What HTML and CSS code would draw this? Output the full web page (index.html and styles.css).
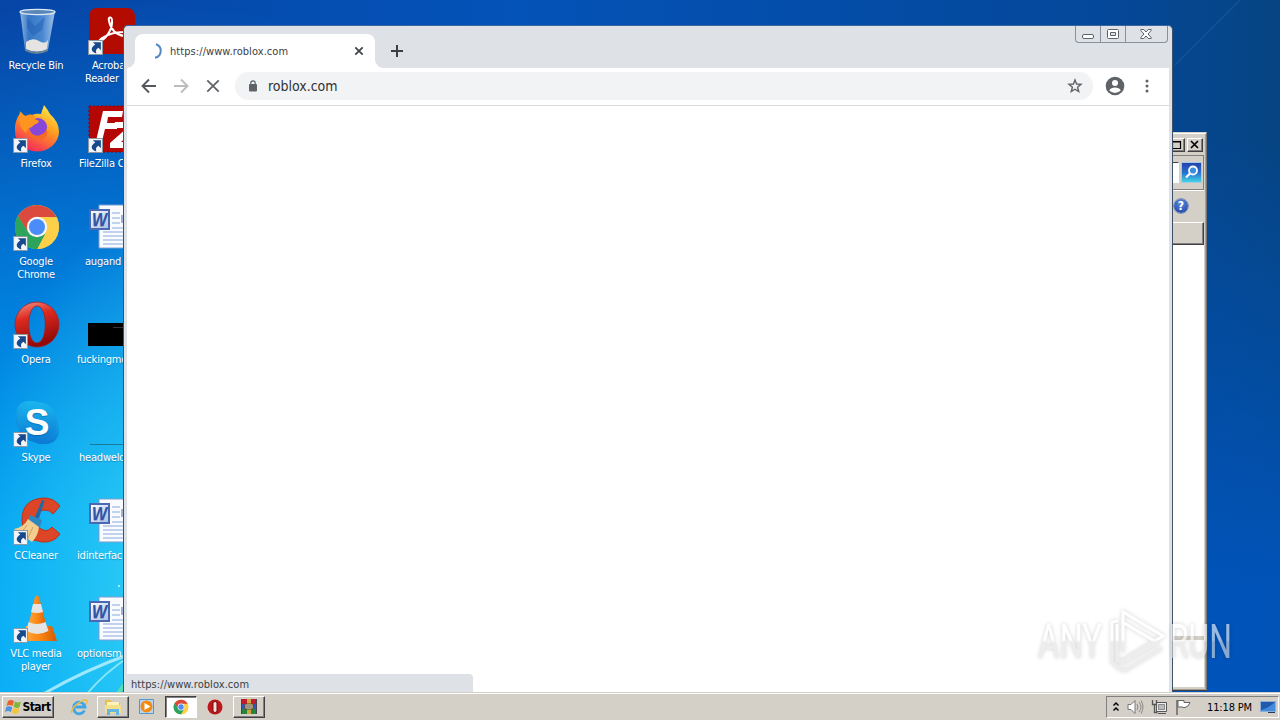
FILE: index.html
```html
<!DOCTYPE html>
<html lang="en">

<head>
    <meta charset="UTF-8" />
    <meta name="viewport" content="width=device-width, initial-scale=1.0" />
    <title>Desktop</title>
    <link rel="stylesheet" href="styles.css">
</head>

<body>
    <!-- Shared symbols -->
    <svg class="defs" width="0" height="0">
        <defs>
            <linearGradient id="gFire" x1="0.8" y1="0" x2="0.3" y2="1">
                <stop offset="0" stop-color="#fff04a" />
                <stop offset=".45" stop-color="#ff9a1f" />
                <stop offset="1" stop-color="#f5225f" />
            </linearGradient>
            <linearGradient id="gOpera" x1="0" y1="0" x2="0.3" y2="1">
                <stop offset="0" stop-color="#f7978a" />
                <stop offset=".4" stop-color="#dc2a20" />
                <stop offset="1" stop-color="#940a08" />
            </linearGradient>
            <linearGradient id="gBin" x1="0" y1="0" x2="1" y2="0">
                <stop offset="0" stop-color="#a9c9ea" />
                <stop offset=".25" stop-color="#3f7fc9" />
                <stop offset=".65" stop-color="#5594d8" />
                <stop offset="1" stop-color="#bcd6ee" />
            </linearGradient>
            <linearGradient id="gCone" x1="0" y1="0" x2="1" y2="0">
                <stop offset="0" stop-color="#ffac3e" />
                <stop offset=".5" stop-color="#fb8716" />
                <stop offset="1" stop-color="#d45a00" />
            </linearGradient>
            <linearGradient id="gSkype" x1="0" y1="0" x2="0" y2="1">
                <stop offset="0" stop-color="#19b5ee" />
                <stop offset="1" stop-color="#0c7ad4" />
            </linearGradient>
            <linearGradient id="gWord" x1="0" y1="0" x2="1" y2="1">
                <stop offset="0" stop-color="#ffffff" />
                <stop offset="1" stop-color="#a9bde6" />
            </linearGradient>
            <linearGradient id="gMark" gradientUnits="userSpaceOnUse" x1="0" y1="0" x2="0" y2="72">
                <stop offset=".5" stop-color="#fff" />
                <stop offset=".53" stop-color="#e2e2e2" />
            </linearGradient>
        </defs>
        <symbol id="arrow" viewBox="0 0 14 14">
            <path d="M0 0h14v14H0z" fill="#f3f5f8" />
            <path d="M.5.5h13v13H.5z" fill="none" stroke="#8d98a5" />
            <path d="M4.500 2h7.500v7.500L9.800 7.300C7.500 8.500 7 10 7.800 12.500 2.500 11.500 2 7 6.800 4.300z" fill="#174a8c" />
        </symbol>
        <symbol id="chrome" viewBox="0 0 48 48">
            <circle cx="24" cy="24" r="22" fill="#fcd049" />
            <path d="M24 14h19.600L33 24z" fill="#dc4a3d" />
            <path d="M33 29 24 46A22 22 0 0 0 44.500 16L43.600 14H24z" fill="#fcd049" />
            <path d="M4.950 13 15 29l9 5 8-3-8 15A22 22 0 0 1 4.950 13z" fill="#2ca45c" />
            <path d="M24 24 15 29 4.950 13A22 22 0 0 1 43.600 14H24z" fill="#dc4a3d" />
            <path d="M5 13 15.500 30 24 34l8-3-8 15A22 22 0 0 1 5 13z" fill="#2ca45c" />
            <circle cx="24" cy="24" r="10.200" fill="#f5f5f5" />
            <circle cx="24" cy="24" r="8" fill="#4b8df8" />
        </symbol>
        <symbol id="word" viewBox="0 0 48 48">
            <path d="M11 3h34v43H11z" fill="#f9fbff" stroke="#7f9dcf" />
            <path d="M24 11h8M24 16h8M24 21h8M24 26h18M15 30h26M15 34h26M15 38h26M15 42h26" stroke="#87a9dc" />
            <path d="M33 13h10v8H33z" fill="#9db4d8" />
            <path d="M2 8h19v19H2z" fill="url(#gWord)" stroke="#4a68b4" stroke-width="2" />
            <text x="11.500" y="23.500" text-anchor="middle" textLength="15" lengthAdjust="spacingAndGlyphs" class="word-letter">W</text>
        </symbol>
    </svg>

    <div class="desktop">
        <svg class="wallpaper" width="1280" height="720">
            <path d="M40 696Q80 672 130 654" fill="none" stroke="#c9f5ff" stroke-width="3" opacity=".75" />
            <path d="M84 698Q100 676 130 656" fill="none" stroke="#b4f3fa" stroke-width="2" opacity=".7" />
            <path d="M116 696L128 680" stroke="#64e6a4" stroke-width="4" opacity=".8" />
            <path d="M1175 65L1245 -5" stroke="#3f78b5" stroke-width="2" opacity=".2" />
            <circle cx="119" cy="586" r="1" fill="#d6f8ff" />
        </svg>

        <div class="icons">
            <div class="item">
                <svg viewBox="0 0 48 48">
                    <path d="M7 5 12 44Q24 50 35 44L42 5z" fill="url(#gBin)" opacity=".85" />
                    <path d="M13 36Q20 31 26 35t9-1l-1 9Q24 48 13 43z" fill="#e6e4e2" />
                    <path d="M14 12l8 8 10-9-3 13-9 6-6-8z" fill="#1d5bb0" opacity=".45" />
                    <path d="M12 43Q24 49 35 43v2Q24 51 12 45z" fill="#6b7f92" />
                    <ellipse cx="24.500" cy="6" rx="17.500" ry="2.600" fill="#5b86b8" stroke="#dce8f3" stroke-width="1.400" />
                </svg>
                <span>Recycle Bin</span>
            </div>
            <div class="item">
                <svg viewBox="0 0 48 48">
                    <rect x="1" y="2" width="46" height="46" rx="8" fill="#b30b00" />
                    <path d="M12 35C18 33 25 23 24 14c-.5-4-4-3-3 1 2 9 8 14 15 15 5 0 4-5-1-4-8 0-16 3-21 6-4 3-4 5-2 3z" fill="none" stroke="#fff" stroke-width="2" />
                    <use href="#arrow" x="0" y="34" width="15" height="15" />
                </svg>
                <span class="pad-acrobat">Acroba</span>
                <span class="pad-85">Reader</span>
            </div>
            <div class="item">
                <svg viewBox="0 0 48 48">
                    <path d="M28 10Q30 4 31 1q4 5 6 9 9 8 9 18A22 20 0 0 1 2 27Q1 17 8 8q2 3 5 4 3-2 6-1 4-2 9-1z" fill="url(#gFire)" />
                    <circle cx="25" cy="23" r="9" fill="#8747d9" />
                    <path d="M7 7q2 5 6 5 4-3 9 0-2 3 2 4 3 1 1 3-5 2-6 4-5 1-6 6Q4 22 7 7z" fill="#ff9420" />
                    <path d="M14 27q10 10 20-1 2 7-6 10-10 1-14-9z" fill="#f66a27" />
                    <use href="#arrow" x="0" y="34" width="15" height="15" />
                </svg>
                <span>Firefox</span>
            </div>
            <div class="item">
                <svg viewBox="0 0 48 48">
                    <path d="M1 2h47v46H1z" fill="#b50606" stroke="#8c0000" stroke-dasharray="2 2" />
                    <path d="M15 7h20l-1 6H20l-1 6h11l-1 6H17l-3 12H8zM27 18h22v6L33 38h14v6H22v-5l17-15H26z" fill="#fff" />
                    <use href="#arrow" x="0" y="34" width="15" height="15" />
                </svg>
                <span class="pad-79">FileZilla C</span>
            </div>
            <div class="item">
                <svg viewBox="0 0 48 48">
                    <use href="#chrome" y="1" width="48" height="48" />
                    <use href="#arrow" x="0" y="34" width="15" height="15" />
                </svg>
                <span>Google<br>Chrome</span>
            </div>
            <div class="item">
                <svg viewBox="0 0 48 48"><use href="#word" /></svg>
                <span class="pad-85">augand</span>
            </div>
            <div class="item">
                <svg viewBox="0 0 48 48">
                    <path fill-rule="evenodd" d="M24 2a22 22.500 0 0 1 0 45 22 22.500 0 0 1 0-45zm0 4c-11 0-11 37 0 37s11-37 0-37z" fill="url(#gOpera)" stroke="#a51d17" stroke-width=".7" />
                    <use href="#arrow" x="0" y="34" width="15" height="15" />
                </svg>
                <span>Opera</span>
            </div>
            <div class="item">
                <svg viewBox="0 0 48 48">
                    <path d="M0 23h48v23H0z" fill="#000" />
                    <path d="M25 27.500h12" stroke="#333" />
                </svg>
                <span class="pad-77">fuckingmo</span>
            </div>
            <div class="item">
                <svg viewBox="0 0 48 48">
                    <rect x="3" y="3" width="30" height="32" rx="13" fill="url(#gSkype)" />
                    <rect x="15" y="14" width="31" height="32" rx="13" fill="url(#gSkype)" />
                    <circle cx="24" cy="24" r="20" fill="url(#gSkype)" />
                    <text x="24" y="37" text-anchor="middle" class="skype-letter">S</text>
                    <use href="#arrow" x="0" y="34" width="15" height="15" />
                </svg>
                <span>Skype</span>
            </div>
            <div class="item">
                <svg viewBox="0 0 48 48"><path d="M2 46.500h46" stroke="#177a99" /></svg>
                <span class="pad-79">headweld</span>
            </div>
            <div class="item">
                <svg viewBox="0 0 48 48">
                    <path d="M47 10Q41 2 31 2 9 3 9 24q0 20 20 22 12 1 18-8l-8-7q-4 5-9 3-8-3-7-11 1-9 9-9 5 0 8 4z" fill="#dd4527" stroke="#b9321b" />
                    <path d="M29 4l2.500 1-6 19-4-2z" fill="#2467a8" />
                    <path d="M17 19l12 5-2 7-12-6z" fill="#2f88bd" />
                    <path d="M15 23l11 8q-1 9-7 15L1 33Q11 31 15 23z" fill="#f2cf91" />
                    <path d="M14 29 8 37M20 31l-5 11" stroke="#cca45f" />
                    <use href="#arrow" x="0" y="34" width="15" height="15" />
                </svg>
                <span>CCleaner</span>
            </div>
            <div class="item">
                <svg viewBox="0 0 48 48"><use href="#word" /></svg>
                <span class="pad-77">idinterfac</span>
            </div>
            <div class="item">
                <svg viewBox="0 0 48 48">
                    <path d="M13 32h26l5 15H9z" fill="url(#gCone)" />
                    <path d="M22 3q2-3 4 0l9 35q-11 6-21 0z" fill="url(#gCone)" />
                    <path d="M20 10h8l2 8q-6 2-12 0zM15.500 28q8 4 17 0l3 9q-11 6-22 0z" fill="#e4e4e4" />
                    <use href="#arrow" x="0" y="34" width="15" height="15" />
                </svg>
                <span>VLC media<br>player</span>
            </div>
            <div class="item">
                <svg viewBox="0 0 48 48"><use href="#word" /></svg>
                <span class="pad-77">optionsm</span>
            </div>
        </div>

        <!-- Explorer window behind the browser -->
        <div class="explorer">
            <div class="explorer-title">
                <span class="classic-btn"><svg width="14" height="12"><path d="M2.500 2.500h8v7h-8zM2 3h9" fill="none" stroke="#000" stroke-width="1.200" /></svg></span>
                <span class="classic-btn"><svg width="14" height="12"><path d="M3 2l7 7M10 2L3 9" stroke="#000" stroke-width="1.700" /></svg></span>
            </div>
            <div class="explorer-search">
                <div class="search-input"></div>
                <div class="search-btn">
                    <svg width="19" height="20"><circle cx="11" cy="7.500" r="4" fill="#3d8ee0" stroke="#fff" stroke-width="1.800" /><path d="M8 10.500l-4 4" stroke="#fff" stroke-width="2.200" /></svg>
                </div>
            </div>
            <div class="explorer-tools"><span class="help">?</span></div>
            <div class="explorer-header"></div>
            <div class="explorer-list"></div>
            <div class="explorer-details"></div>
        </div>

        <div class="browser">
            <div class="tabstrip">
                <div class="tab">
                    <svg width="16" height="16"><path d="M6 1.200a7 7 0 0 1-1 13.500" fill="none" stroke="#5488c7" stroke-width="2" /></svg>
                    <span class="tab-title">https://www.roblox.com</span>
                    <svg width="10" height="10"><path d="M1.300 1.300l7.400 7.400M8.700 1.300L1.300 8.700" stroke="#45494d" stroke-width="1.900" /></svg>
                </div>
                <svg class="new-tab" width="12" height="12"><path d="M6 0v12M0 6h12" stroke="#3c4043" stroke-width="2" /></svg>
                <div class="window-buttons">
                    <span><svg width="13" height="6"><rect x=".5" y=".5" width="11" height="4" rx="1.500" fill="#fff" stroke="#5c626c" /></svg></span>
                    <span><svg width="13" height="11"><rect x=".5" y=".5" width="11" height="9" rx="1" fill="#fff" stroke="#5c626c" /><path d="M3.500 3.500h5v3h-5z" fill="#dee1e6" stroke="#5c626c" /></svg></span>
                    <span><svg width="13" height="11"><path d="M.8.500h3L6 3 8.200.500h3v1L8 5l3.200 3.500v1h-3L6 7 3.800 9.500h-3v-1L4 5 .8 1.500z" fill="#fff" stroke="#5c626c" /></svg></span>
                </div>
            </div>
            <div class="toolbar">
                <svg width="16" height="16"><path d="M15 8H2M8 1.500L1.500 8 8 14.500" fill="none" stroke="#55595d" stroke-width="1.900" /></svg>
                <svg width="16" height="16"><path d="M1 8h13M8 1.500L14.500 8 8 14.500" fill="none" stroke="#babcbe" stroke-width="1.900" /></svg>
                <svg width="16" height="16"><path d="M2.300 2.300l11.400 11.400M13.700 2.300L2.300 13.700" stroke="#5f6368" stroke-width="1.800" /></svg>
                <div class="omnibox">
                    <svg width="10" height="12"><rect x="1" y="4" width="8" height="7.500" rx="1" fill="#5f6368" /><path d="M2.800 5V3a2.200 2.200 0 0 1 4.400 0v2" fill="none" stroke="#5f6368" stroke-width="1.200" /></svg>
                    <span>roblox.com</span>
                    <svg class="star" width="16" height="16"><path d="M8 2l1.600 4 4.400.3-3.400 2.900 1.100 4.300L8 11.200l-3.700 2.300 1.100-4.300L2 6.300 6.400 6z" fill="none" stroke="#5f6368" stroke-width="1.400" /></svg>
                </div>
                <svg class="profile" width="20" height="20"><circle cx="10" cy="10" r="9.300" fill="#5f6368" /><circle cx="10" cy="7" r="3" fill="#fff" /><path d="M4.200 14.200Q6 11.500 10 11.500t5.800 2.700Q13.500 17 10 17t-5.800-2.800z" fill="#fff" /></svg>
                <svg class="menu" width="4" height="16"><circle cx="2" cy="3" r="1.500" fill="#5f6368" /><circle cx="2" cy="8" r="1.500" fill="#5f6368" /><circle cx="2" cy="13" r="1.500" fill="#5f6368" /></svg>
            </div>
            <div class="page">
                <div class="status">https://www.roblox.com</div>
            </div>
        </div>

        <svg class="watermark" width="200" height="76" viewBox="0 0 200 76">
            <text x="3" y="54" textLength="64" lengthAdjust="spacingAndGlyphs">ANY</text>
            <text x="134" y="54" textLength="63" lengthAdjust="spacingAndGlyphs">RUN</text>
            <path d="M88 48V8L128 32 90 55M89 19l32 19" />
            <path d="M83 17l-6 1v40l9 8h5l36-22" />
            <path d="M82 20v37l8-1M86 60l38-22" />
        </svg>
    </div>

    <div class="taskbar">
        <div class="start">
            <svg width="17" height="16"><path d="M3 2q3-2 6 0L7.500 7q-3-2-6 0z" fill="#e8622a" /><path d="M10 2.500q3 2 6 0L14.500 8q-3 2-6-.5z" fill="#7fb63b" /><path d="M1.200 8.200q3-2 6 0L6 13q-3-2-6 0z" fill="#4d94de" /><path d="M8.200 8.700q3 2 6 0L13 14q-3 2-6-.5z" fill="#f7c52d" /></svg>
            <span>Start</span>
        </div>
        <div class="task plain">
            <svg width="18" height="18"><path d="M14.500 12.500a5.800 5.800 0 1 1 .5-3.500H5" fill="none" stroke="#3da5e8" stroke-width="2.800" /><path d="M2 15C-1 12 10 2 16 2q2 1 0 4" fill="none" stroke="#e9bd48" stroke-width="1.500" /></svg>
        </div>
        <div class="task">
            <svg width="18" height="18"><path d="M1 2h6l1 2h8v11H1z" fill="#e3bf58" /><path d="M3 4h12v6H3z" fill="#fff3b7" /><path d="M1 7h16v8H1z" fill="#f5df8b" /><path d="M3 17v-6h12v6h-3v-3H6v3z" fill="#66b7df" /></svg>
        </div>
        <div class="task plain">
            <svg width="18" height="18"><path d="M1.500 1.500h14v14h-14z" fill="#b8d6f1" stroke="#5497cf" /><circle cx="8.500" cy="8.500" r="6" fill="#f38a14" /><path d="M6.500 5l6 3.500-6 3.500z" fill="#fff" /></svg>
        </div>
        <div class="task active">
            <svg width="16" height="16"><use href="#chrome" width="16" height="16" /></svg>
        </div>
        <div class="task plain">
            <svg width="18" height="18"><circle cx="9" cy="9" r="7.500" fill="#bd171c" /><rect x="7" y="3.500" width="4" height="11" rx="2" fill="#eee2dd" stroke="#7c090c" /></svg>
        </div>
        <div class="task">
            <svg width="18" height="18"><path d="M1 1h16v5H1z" fill="#c01c30" /><path d="M1 6h16v5H1z" fill="#3558b5" /><path d="M1 11h16v5H1z" fill="#26853a" /><path d="M7 1h4v15H7z" fill="#d4a344" /><path d="M5 6h8v5H5z" fill="#eee4c3" stroke="#5e461a" /><path d="M7 7v3M9 7v3M11 7v3M1.500 1v15M16.500 1v15" stroke="#4b4150" /></svg>
        </div>
        <div class="tray">
            <svg width="8" height="12"><path d="M1.500 4.500L4 2l2.500 2.500M1.500 9.500L4 7l2.500 2.500" fill="none" stroke="#000" stroke-width="1.500" /></svg>
            <svg width="17" height="16"><path d="M1 5.500h3l4-4v13l-4-4H1z" fill="#fff" stroke="#777" /><path d="M10 5q2 3 0 6M12 3q4 5 0 10M14 1.500q4 6.500 0 13" fill="none" stroke="#888" /></svg>
            <svg width="17" height="16"><path d="M5.500 3.500h10v9h-10z" fill="#eee" stroke="#555" /><path d="M7 14.500h8" stroke="#555" /><path d="M7.500 5.500h6v5h-6z" fill="#bbb" stroke="#888" /><path d="M1.500 1v4.500h4V1M3.500 6v7.500h3" fill="none" stroke="#555" stroke-width="1.300" /></svg>
            <svg width="17" height="16"><path d="M2 1v15" stroke="#666" stroke-width="1.500" /><path d="M3 1.500h6v2h6l-2 3.500-3 1.500H8V8H3z" fill="#fff" stroke="#666" /></svg>
            <span class="clock">11:18 PM</span>
            <svg width="16" height="14"><path d="M.5 1.500h15v10H.5z" fill="#2259ad" stroke="#8faed3" /><path d="M1 10Q9 8 15 2v9H1z" fill="#438bdd" /><path d="M8 12.500h7" stroke="#263b5b" /></svg>
        </div>
    </div>
</body>

</html>
```
FILE: styles.css
```css
* {
    box-sizing: border-box;
}

body {
    font-family: "DejaVu Sans Condensed", "DejaVu Sans", sans-serif;
    font-size: 11px;
    margin: 0;
    width: 1280px;
    height: 720px;
    overflow: hidden;
    display: flex;
    flex-direction: column;
}

svg {
    display: block;
    flex: none;
}

.defs {
    position: absolute;
}

.desktop {
    position: relative;
    height: 692px;
    overflow: hidden;
    background:
        radial-gradient(ellipse 260px 420px at 210px 610px, #50e3f4 0%, rgba(48, 207, 245, .8) 35%, rgba(16, 170, 246, 0) 100%),
        radial-gradient(ellipse 700px 650px at 120px 650px, #00a5f5 20%, rgba(0, 140, 232, .8) 55%, rgba(0, 80, 190, 0) 100%),
        linear-gradient(to bottom, rgba(0, 75, 180, 0) 20%, rgba(0, 85, 190, .9) 85%),
        linear-gradient(to right, #0645a6 0%, #0453b8 40%, #04489b 85%, #064482 100%);
}

.wallpaper {
    position: absolute;
}

/* Desktop icons */
.icons {
    position: relative;
    display: grid;
    grid-template-columns: 74px 74px;
    grid-auto-rows: 98px;
    column-gap: 1px;
    padding-top: 6px;
    width: 149px;
}

.item {
    color: #fff;
    line-height: 13px;
    text-align: center;
    text-shadow: 0 1px 1px rgba(0, 40, 90, .3);
}

.item > svg {
    width: 48px;
    height: 48px;
    margin: 0 auto 5px;
    overflow: visible;
}

.item span {
    display: block;
    white-space: nowrap;
    margin-right: 2px;
    letter-spacing: -.2px;
}

.item .pad-77,
.item .pad-79,
.item .pad-85,
.item .pad-acrobat {
    text-align: left;
    padding-left: 2px;
}

.item .pad-79 {
    padding-left: 4px;
}

.item .pad-85 {
    padding-left: 10px;
}

.item .pad-acrobat {
    padding-left: 17px;
}

.word-letter {
    font: italic bold 18px "Liberation Sans", sans-serif;
    fill: #2f55a8;
}

.skype-letter {
    font: bold 37px "Liberation Sans", sans-serif;
    fill: #fff;
}

/* Explorer window */
.explorer {
    position: absolute;
    left: 900px;
    top: 132px;
    width: 307px;
    height: 559px;
    background: #d4d0c8;
    border: 1px solid #d4d0c8;
    border-right-color: #777;
    border-bottom-color: #404040;
    box-shadow: inset 1px 1px #fff, inset -1px -1px #a39e96;
    padding: 3px 2px 3px 3px;
    display: flex;
    flex-direction: column;
}

.explorer-title {
    display: flex;
    justify-content: flex-end;
    gap: 2px;
    height: 19px;
    padding: 2px 1px 0 0;
}

.classic-btn {
    width: 16px;
    height: 14px;
    background: #d4d0c8;
    border: 1px solid;
    border-color: #fff #404040 #404040 #fff;
    box-shadow: inset -1px -1px #808080;
}

.explorer-search {
    display: flex;
    align-items: center;
    gap: 2px;
    height: 35px;
    padding-right: 1px;
    border: 1px solid;
    border-color: #808080 #808080 #808080 #fff;
    box-shadow: 0 1px #fff;
}

.search-input {
    flex: 1;
    height: 21px;
    background: #fff;
    border: 1px solid #404040;
    border-right-color: #fff;
    border-bottom-color: #fff;
}

.search-btn {
    width: 21px;
    height: 21px;
    background: linear-gradient(#2443ad, #286fd0 50%, #43d4e3);
    border: 1px solid #a5c8e8;
}

.explorer-tools {
    height: 32px;
    display: flex;
    justify-content: flex-end;
    align-items: center;
    padding-right: 15px;
}

.help {
    width: 16px;
    height: 16px;
    border-radius: 50%;
    background: radial-gradient(circle at 50% 30%, #5d8dde, #173b9b);
    border: 1px solid #c4d2ee;
    outline: 1px solid #8795b2;
    outline-offset: -1px;
    color: #fff;
    font-size: 12px;
    font-weight: bold;
    line-height: 14px;
    text-align: center;
}

.explorer-header {
    height: 23px;
    border: 1px solid;
    border-color: #fff #404040 #404040 #fff;
    box-shadow: inset -1px -1px #808080;
}

.explorer-list {
    height: 391px;
    background: #fff;
}

.explorer-details {
    flex: 1;
    background: #fff;
    border-top: 4px solid #d4d0c8;
}

/* Browser window */
.browser {
    position: absolute;
    left: 123px;
    top: 25px;
    width: 1050px;
    height: 668px;
    border: 1px solid #3f5267;
    border-bottom: 0;
    border-top-color: #39679f;
    border-radius: 5px 5px 0 0;
    background: #dee1e6;
    padding: 0 3px;
    display: flex;
    flex-direction: column;
    overflow: hidden;
}

.tabstrip {
    display: flex;
    height: 42px;
    padding: 8px 1px 0 8px;
    flex: none;
}

.tab {
    position: relative;
    width: 240px;
    height: 34px;
    background: #fff;
    border-radius: 8px 8px 0 0;
    display: flex;
    align-items: center;
    padding: 0 11px 0 15px;
}

/* Curved feet of the tab */
.tab::before,
.tab::after {
    content: "";
    position: absolute;
    bottom: 0;
    width: 8px;
    height: 8px;
}

.tab::before {
    left: -8px;
    background: radial-gradient(circle at 0 0, transparent 7.5px, #fff 8px);
}

.tab::after {
    right: -8px;
    background: radial-gradient(circle at 100% 0, transparent 7.5px, #fff 8px);
}

.tab-title {
    flex: 1;
    margin-left: 4px;
    color: #3c4043;
    letter-spacing: .07px;
}

.new-tab {
    margin: 11px 0 0 16px;
}

.window-buttons {
    display: flex;
    height: 17px;
    margin: -8px 0 0 auto;
    border: 1px solid #8a9099;
    border-top: 0;
    border-radius: 0 0 4px 4px;
}

.window-buttons span {
    width: 25px;
    display: flex;
    align-items: center;
    justify-content: center;
    border-right: 1px solid #8a9099;
}

.window-buttons span:first-child {
    padding-top: 5px;
}

.window-buttons span:last-child {
    width: 41px;
    border: 0;
}

.toolbar {
    flex: none;
    height: 38px;
    background: #fff;
    border-bottom: 1px solid #d9dbde;
    display: flex;
    align-items: center;
    gap: 16px;
    padding: 0 20px 2px 14px;
}

.omnibox {
    flex: 1;
    height: 28px;
    margin-left: -2px;
    border-radius: 14px;
    background: #f1f3f4;
    color: #303236;
    display: flex;
    align-items: center;
    padding: 0 10px 0 13px;
    font-size: 14px;
}

.omnibox span {
    margin-left: 10px;
    letter-spacing: -.02px;
}

.star {
    margin-left: auto;
}

.profile {
    margin-left: -4px;
}

.menu {
    margin-left: 4px;
}

.page {
    flex: 1;
    background: #fff;
    display: flex;
    align-items: flex-end;
}

.status {
    width: 346px;
    height: 19px;
    background: #dee1e6;
    border-radius: 0 4px 0 0;
    color: #3c4043;
    line-height: 21px;
    padding-left: 4px;
    letter-spacing: .07px;
}

.watermark {
    position: absolute;
    left: 1035px;
    top: 604px;
    opacity: .6;
    filter: drop-shadow(0 0 2px rgba(0, 0, 0, .3));
}

.watermark text {
    font: 48px Roboto, sans-serif;
    fill: url(#gMark);
}

.watermark path {
    fill: none;
    stroke: url(#gMark);
    stroke-width: 3;
}

/* Taskbar */
.taskbar {
    height: 28px;
    background: #d4d0c8;
    border-top: 1px solid #d4d0c8;
    box-shadow: inset 0 1px #fff;
    display: flex;
    align-items: center;
    padding: 1px 1px 0 2px;
    z-index: 1;
}

.start,
.task {
    height: 22px;
    border: 1px solid;
    border-color: #fff #404040 #404040 #fff;
    box-shadow: inset -1px -1px #808080;
    display: flex;
    align-items: center;
    justify-content: center;
}

.start {
    width: 52px;
    margin-right: 9px;
    font-size: 12px;
    font-weight: bold;
    letter-spacing: -.5px;
}

.task {
    width: 32px;
    margin-right: 2px;
}

.task.plain {
    border-color: transparent;
    box-shadow: none;
}

.task.active {
    background: #fff;
    border-color: #404040 #fff #fff #404040;
    box-shadow: inset 1px 1px #808080;
}

.tray {
    margin-left: auto;
    height: 22px;
    width: 173px;
    border: 1px solid;
    border-color: #808080 #fff #fff #808080;
    display: flex;
    align-items: center;
    gap: 7px;
    padding: 0 2px 0 5px;
}

.clock {
    margin: 0 1px 0 auto;
    white-space: nowrap;
    letter-spacing: -.15px;
}
```
